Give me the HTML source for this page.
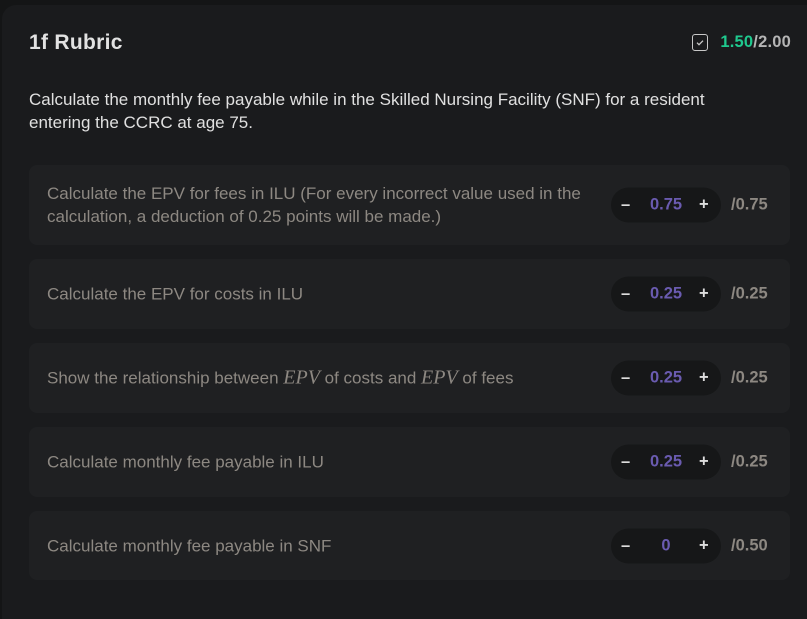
<!DOCTYPE html>
<html><head><style>
html,body{margin:0;width:807px;height:619px;overflow:hidden}
body{background:#141516;font-family:"Liberation Sans",sans-serif;position:relative}
.card{position:absolute;left:2px;top:5px;width:830px;height:640px;background:#1a1b1d;border-radius:14px}
.title{position:absolute;left:29px;top:31px;font-size:21px;letter-spacing:0.3px;font-weight:bold;color:#e2e2e2}
.score{position:absolute;right:16px;top:33px;font-size:16.5px;letter-spacing:0.2px;font-weight:bold;color:#b5b5b5;display:flex;align-items:center}
.score .g{color:#1fc98e}
.chk{width:14px;height:15px;border:1.5px solid #c8c8c8;border-radius:3px;margin-right:12px;position:relative}
.desc{position:absolute;left:29px;top:88px;width:740px;font-size:17px;line-height:23px;color:#e0e0e0}
.row{position:absolute;left:29px;width:761px;background:#1f2022;border-radius:8px}
.row .t{position:absolute;left:18px;width:560px;top:50%;transform:translateY(-50%);font-size:17px;line-height:23px;color:#8d8882}
.pill{position:absolute;left:582px;top:50%;transform:translateY(-50%);width:110px;height:35px;background:#161718;border-radius:18px;font-size:16.5px;font-weight:bold}
.pill span{position:absolute;top:8px}
.m{left:10px;color:#ddd}.v{left:0;width:110px;text-align:center;color:#6a5bb0}.p{left:88px;color:#ddd}
.mx{position:absolute;left:702px;top:50%;transform:translateY(-50%);font-size:16.5px;font-weight:bold;color:#8d8882}
i{font-family:"Liberation Serif",serif;font-size:20px}
</style></head><body>
<div class="card"></div>
<div class="title">1f Rubric</div>
<div class="score"><div class="chk"><svg width="14" height="15" viewBox="0 0 14 15" style="position:absolute;left:0;top:0"><path d="M4 7.7l2 2 4-4" stroke="#c8c8c8" stroke-width="1.3" fill="none"/></svg></div><span class="g">1.50</span>/2.00</div>
<div class="desc">Calculate the monthly fee payable while in the Skilled Nursing Facility (SNF) for a resident<br>entering the CCRC at age 75.</div>

<div class="row" style="top:165px;height:80px"><div class="t">Calculate the EPV for fees in ILU (For every incorrect value used in the<br>calculation, a deduction of 0.25 points will be made.)</div><div class="pill"><span class="v">0.75</span><span class="m">–</span><span class="p">+</span></div><div class="mx">/0.75</div></div>
<div class="row" style="top:259px;height:70px"><div class="t">Calculate the EPV for costs in ILU</div><div class="pill"><span class="v">0.25</span><span class="m">–</span><span class="p">+</span></div><div class="mx">/0.25</div></div>
<div class="row" style="top:343px;height:70px"><div class="t">Show the relationship between <i>EPV</i> of costs and <i>EPV</i> of fees</div><div class="pill"><span class="v">0.25</span><span class="m">–</span><span class="p">+</span></div><div class="mx">/0.25</div></div>
<div class="row" style="top:427px;height:70px"><div class="t">Calculate monthly fee payable in ILU</div><div class="pill"><span class="v">0.25</span><span class="m">–</span><span class="p">+</span></div><div class="mx">/0.25</div></div>
<div class="row" style="top:511px;height:69px"><div class="t">Calculate monthly fee payable in SNF</div><div class="pill"><span class="v">0</span><span class="m">–</span><span class="p">+</span></div><div class="mx">/0.50</div></div>
</body></html>
